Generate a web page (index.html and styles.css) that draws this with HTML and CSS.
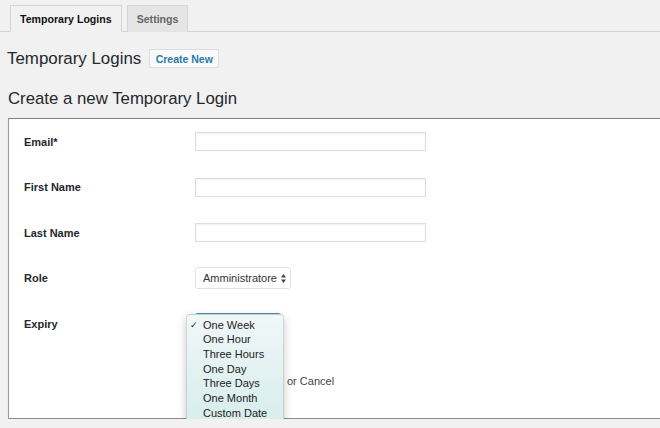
FILE: index.html
```html
<!DOCTYPE html>
<html lang="en">
<head>
<meta charset="utf-8">
<title>Temporary Logins</title>
<link rel="stylesheet" href="styles.css">
</head>
<body>
<nav class="tabs">
  <a class="tab tab-active">Temporary Logins</a>
  <a class="tab">Settings</a>
</nav>
<div class="page-head">
  <h1 class="page-title">Temporary Logins</h1>
  <button class="btn-small">Create New</button>
</div>
<h2 class="section-title">Create a new Temporary Login</h2>
<div class="form-box">
  <div class="form-row">
    <div class="label">Email*</div>
    <div class="field"><div class="text-input"></div></div>
  </div>
  <div class="form-row">
    <div class="label">First Name</div>
    <div class="field"><div class="text-input"></div></div>
  </div>
  <div class="form-row">
    <div class="label">Last Name</div>
    <div class="field"><div class="text-input"></div></div>
  </div>
  <div class="form-row">
    <div class="label">Role</div>
    <div class="field">
      <div class="select">
        <span>Amministratore</span>
        <svg class="updown" width="5" height="9" viewBox="0 0 5 9"><path d="M2.5 0 L5 3.4 L0 3.4 Z M2.5 9 L5 5.6 L0 5.6 Z" fill="#444"/></svg>
      </div>
    </div>
  </div>
  <div class="form-row">
    <div class="label">Expiry</div>
    <div class="field field-expiry">
      <div class="select select-focus"></div>
      <ul class="popup">
        <li class="checked"><span class="check">✓</span>One Week</li>
        <li>One Hour</li>
        <li>Three Hours</li>
        <li>One Day</li>
        <li>Three Days</li>
        <li>One Month</li>
        <li>Custom Date</li>
      </ul>
    </div>
  </div>
  <div class="submit-row">
    <button class="btn-primary"></button>
    <span class="cancel">or Cancel</span>
  </div>
</div>
</body>
</html>
```

FILE: styles.css
```css
html, body {
  margin: 0;
  padding: 0;
  background: #f1f1f1;
  overflow: hidden;
  font-family: "Liberation Sans", Arial, sans-serif;
  color: #23282d;
}

.tabs {
  display: flex;
  align-items: flex-end;
  gap: 5px;
  height: 26px;
  padding: 5px 0 0 10px;
  border-bottom: 1px solid #d4d4d4;
}

.tab {
  box-sizing: border-box;
  height: 27px;
  margin-bottom: -1px;
  padding: 0 9px 0 9px;
  display: flex;
  align-items: center;
  font-size: 10.6px;
  font-weight: bold;
  color: #666;
  background: #e5e5e5;
  border: 1px solid #d4d4d4;
  border-bottom: none;
}

.tab-active {
  color: #111;
  background: #f1f1f1;
  border-bottom: 1px solid #f1f1f1;
}

.page-head {
  display: flex;
  align-items: center;
  gap: 8px;
  margin: 17px 0 0 7px;
  height: 19px;
}

.page-title {
  margin: 0;
  font-size: 16.9px;
  font-weight: normal;
  line-height: 19px;
  color: #23282d;
}

.btn-small {
  box-sizing: border-box;
  height: 19px;
  width: 70px;
  padding: 0;
  font-family: "Liberation Sans", Arial, sans-serif;
  font-size: 10.5px;
  font-weight: bold;
  color: #2a7aa6;
  background: #f7f9fa;
  border: 1px solid #ddd;
  border-radius: 2px;
}

.section-title {
  margin: 19px 0 0 8px;
  font-size: 16.8px;
  font-weight: normal;
  line-height: 24px;
  color: #23282d;
}

.form-box {
  margin: 7px -40px 0 8px;
  background: #fff;
  border: 1px solid #999;
  border-top-color: #7f7f7f;
  border-bottom-color: #8c8c8c;
  padding: 0 0 26.5px 0;
  box-shadow: 0 1px 1px rgba(0,0,0,0.08);
}

.form-row {
  display: flex;
  align-items: center;
  height: 45.5px;
}

.label {
  width: 171px;
  padding-left: 15px;
  font-size: 11px;
  font-weight: bold;
  color: #23282d;
}

.field {
  position: relative;
}

.text-input {
  box-sizing: border-box;
  width: 231px;
  height: 19px;
  background: #fff;
  border: 1px solid #ddd;
  box-shadow: inset 0 1px 2px rgba(0,0,0,0.06);
}

.select {
  box-sizing: border-box;
  display: flex;
  align-items: center;
  justify-content: space-between;
  width: 96px;
  height: 22px;
  padding: 0 4px 0 7px;
  background: #fff;
  border: 1px solid #e2e2e2;
  border-radius: 3px;
  font-size: 11px;
  color: #333;
}

.select-focus {
  width: 86px;
  border: 2px solid #4e8fb0;
}

.popup {
  position: absolute;
  left: -9px;
  top: 1px;
  width: 98px;
  margin: 0;
  padding: 3px 0 4px 0;
  list-style: none;
  background: linear-gradient(180deg, #f0f7f7 0%, #e2f1f1 55%, #d8eded 100%);
  border: 1px solid rgba(0,0,0,0.12);
  border-radius: 4px;
  box-shadow: 0 3px 8px rgba(0,0,0,0.22);
  box-sizing: border-box;
}

.popup li {
  position: relative;
  padding-left: 16px;
  height: 14.67px;
  line-height: 14.67px;
  font-size: 11px;
  color: #222;
}

.check {
  position: absolute;
  left: 3px;
  top: 0;
  font-family: "DejaVu Sans", sans-serif;
  font-size: 9px;
}

.submit-row {
  display: flex;
  align-items: center;
  height: 22px;
  margin-top: 23px;
  padding-left: 186px;
  font-size: 11px;
}

.btn-primary {
  box-sizing: border-box;
  width: 86px;
  height: 22px;
  font-family: "Liberation Sans", Arial, sans-serif;
  font-size: 11px;
  color: #fff;
  background: #0085ba;
  border: 1px solid #0073aa;
  border-radius: 3px;
}

.cancel {
  margin-left: 6px;
  color: #444;
}
```
